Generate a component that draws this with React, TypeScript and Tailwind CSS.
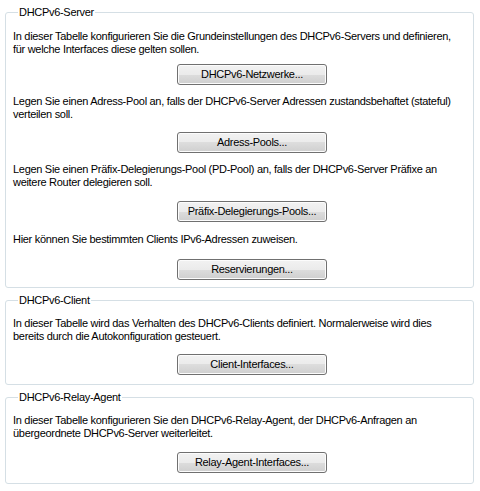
import React from "react";

function Btn({ label }: { label: string }) {
  return (
    <div className="flex pl-[164px]">
      <button className="h-[21px] w-[150px] rounded-[3px] border border-[#707070] bg-[linear-gradient(#f2f2f2_0%,#ebebeb_50%,#dddddd_50%,#cfcfcf_100%)] text-[11px] leading-[13px] tracking-[-0.3px] text-black shadow-[inset_0_0_0_1px_#fcfcfc]">
        {label}
      </button>
    </div>
  );
}

function Group({ title, children, pb }: { title: string; children: React.ReactNode; pb: string }) {
  return (
    <fieldset className={`rounded-[3px] border border-[#d5dfe5] px-[7px] ${pb}`}>
      <legend className="ml-[5px] px-[1px] text-[11px] leading-[13px] tracking-[-0.3px] text-black">{title}</legend>
      {children}
    </fieldset>
  );
}

function P({ children, cls = "" }: { children: React.ReactNode; cls?: string }) {
  return <p className={`whitespace-nowrap text-[11px] leading-[13px] tracking-[-0.3px] text-black ${cls}`}>{children}</p>;
}

export default function App() {
  return (
    <div
      className="w-[480px] h-[491px] bg-white px-[5px] pt-[6px]"
      style={{ fontFamily: '"Liberation Sans", Arial, sans-serif' }}
    >
      <div className="w-[469px] flex flex-col gap-[6px]">
        <Group title="DHCPv6-Server" pb="pb-[7px]">
          <P cls="mt-[11px]">
            In dieser Tabelle konfigurieren Sie die Grundeinstellungen des DHCPv6-Servers und definieren,
            <br />
            für welche Interfaces diese gelten sollen.
          </P>
          <div className="mt-[8px]">
            <Btn label="DHCPv6-Netzwerke..." />
          </div>
          <P cls="mt-[10px]">
            Legen Sie einen Adress-Pool an, falls der DHCPv6-Server Adressen zustandsbehaftet (stateful)
            <br />
            verteilen soll.
          </P>
          <div className="mt-[11px]">
            <Btn label="Adress-Pools..." />
          </div>
          <P cls="mt-[10px]">
            Legen Sie einen Präfix-Delegierungs-Pool (PD-Pool) an, falls der DHCPv6-Server Präfixe an
            <br />
            weitere Router delegieren soll.
          </P>
          <div className="mt-[12px]">
            <Btn label="Präfix-Delegierungs-Pools..." />
          </div>
          <P cls="mt-[11px]">Hier können Sie bestimmten Clients IPv6-Adressen zuweisen.</P>
          <div className="mt-[13px]">
            <Btn label="Reservierungen..." />
          </div>
        </Group>
        <Group title="DHCPv6-Client" pb="pb-[9px]">
          <P cls="mt-[10px]">
            In dieser Tabelle wird das Verhalten des DHCPv6-Clients definiert. Normalerweise wird dies
            <br />
            bereits durch die Autokonfiguration gesteuert.
          </P>
          <div className="mt-[11px]">
            <Btn label="Client-Interfaces..." />
          </div>
        </Group>
        <Group title="DHCPv6-Relay-Agent" pb="pb-[10px]">
          <P cls="mt-[10px]">
            In dieser Tabelle konfigurieren Sie den DHCPv6-Relay-Agent, der DHCPv6-Anfragen an
            <br />
            übergeordnete DHCPv6-Server weiterleitet.
          </P>
          <div className="mt-[12px]">
            <Btn label="Relay-Agent-Interfaces..." />
          </div>
        </Group>
      </div>
    </div>
  );
}
